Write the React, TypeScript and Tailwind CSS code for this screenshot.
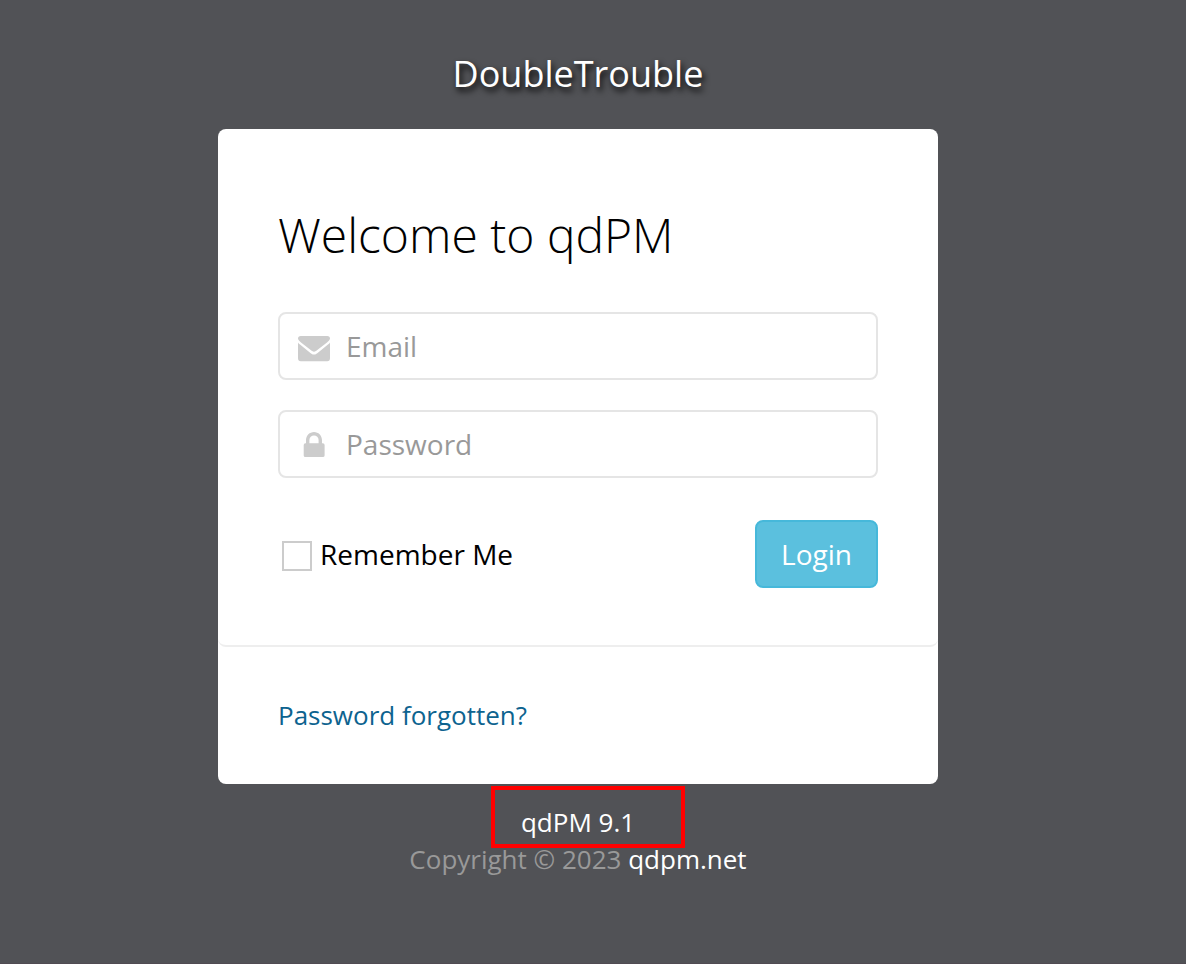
import React from "react";

function EnvelopeIcon() {
  return (
    <svg viewBox="0 -2 32 28" className="h-7 w-8 shrink-0 fill-[#cccccc]" aria-hidden="true">
      <path d="M0 2.8Q0 0 2.8 0H29.2Q32 0 32 2.8C31.6 4.2 30.4 5.4 29 6.5L19.6 13.7C18.4 14.6 17.3 15.7 16 15.7S13.6 14.6 12.4 13.7L3 6.5C1.6 5.4 .4 4.2 0 2.8Z" />
      <path d="M0 6.4Q.8 7.6 2 8.6L11.2 15.9C12.8 17.2 14.2 18.5 16 18.5S19.2 17.2 20.8 15.9L30 8.6Q31.2 7.6 32 6.4V22.3Q32 25.2 29.2 25.2H2.8Q0 25.2 0 22.3Z" />
    </svg>
  );
}

function LockIcon() {
  return (
    <svg viewBox="0 0 32 28" className="h-7 w-8 shrink-0 fill-[#cccccc]" aria-hidden="true">
      <path
        fillRule="evenodd"
        d="M8 11.3V8C8 3.6 11.6 0 16 0S24 3.6 24 8V11.3H24.8Q26.6 11.3 26.6 13V23.4Q26.6 25.1 24.8 25.1H7.4Q5.7 25.1 5.7 23.4V13Q5.7 11.3 7.4 11.3ZM11.4 11.3H20.6V8A4.6 4.6 0 0 0 11.4 8Z"
      />
    </svg>
  );
}

type FieldProps = { id: string; type: string; label: string; icon: React.ReactNode };

function Field({ id, type, label, icon }: FieldProps) {
  return (
    <div className="flex h-[68px] items-center gap-4 rounded-lg border-2 border-[#e5e5e5] bg-white px-[18px]">
      <label htmlFor={id} aria-label={label} className="shrink-0 pt-1">
        {icon}
      </label>
      <input
        id={id}
        type={type}
        aria-label={label}
        placeholder={label}
        className="h-full w-full min-w-0 bg-transparent text-[28px] text-black outline-none placeholder:text-[#999999]"
      />
    </div>
  );
}

export default function App() {
  return (
    <div className="flex min-h-screen flex-col items-center border-b border-[#504b52] bg-[#515256] pr-[30px] pt-12 font-['Open_Sans','Noto_Sans',sans-serif]">
      <header className="text-4xl leading-[52px] text-white [text-shadow:2px_4px_6px_#000000]">
        DoubleTrouble
      </header>
      <main className="mt-[29px] w-full max-w-[720px] rounded-lg bg-white">
        <form
          className="rounded-lg border-b-2 border-[#eeeeee] px-[60px] pb-[57px] pt-[74px]"
          onSubmit={(e) => e.preventDefault()}
        >
          <h1 className="text-5xl leading-16 font-light text-black">Welcome to qdPM</h1>
          <div className="mt-[45px] flex flex-col gap-[30px]">
            <Field id="email" type="email" label="Email" icon={<EnvelopeIcon />} />
            <Field id="password" type="password" label="Password" icon={<LockIcon />} />
          </div>
          <div className="mt-[42px] flex items-center justify-between">
            <label className="flex items-center gap-2 pl-1 text-[28px] text-black">
              <input
                type="checkbox"
                className="mt-1 size-[30px] appearance-none border-2 border-[#cccccc] bg-white checked:bg-[#5bc0de]"
              />
              Remember Me
            </label>
            <button
              type="submit"
              className="h-[68px] rounded-lg border-2 border-[#46b8da] bg-[#5bc0de] px-6 text-[28px] text-white"
            >
              Login
            </button>
          </div>
        </form>
        <div className="px-[60px] pb-[51px] pt-[50px] text-[26px] leading-9">
          <a href="#forgot" className="text-[#0d638f]">
            Password forgotten?
          </a>
        </div>
      </main>
      <footer className="relative mt-5 text-center text-[26px] leading-[37px] text-[#999999]">
        <div className="absolute -top-[18px] left-[82px] h-[62px] w-[194px] border-4 border-[#ff0000]" />
        <p className="text-white">qdPM 9.1</p>
        <p>
          Copyright © 2023{" "}
          <a href="#qdpm" className="text-white">
            qdpm.net
          </a>
        </p>
      </footer>
    </div>
  );
}
